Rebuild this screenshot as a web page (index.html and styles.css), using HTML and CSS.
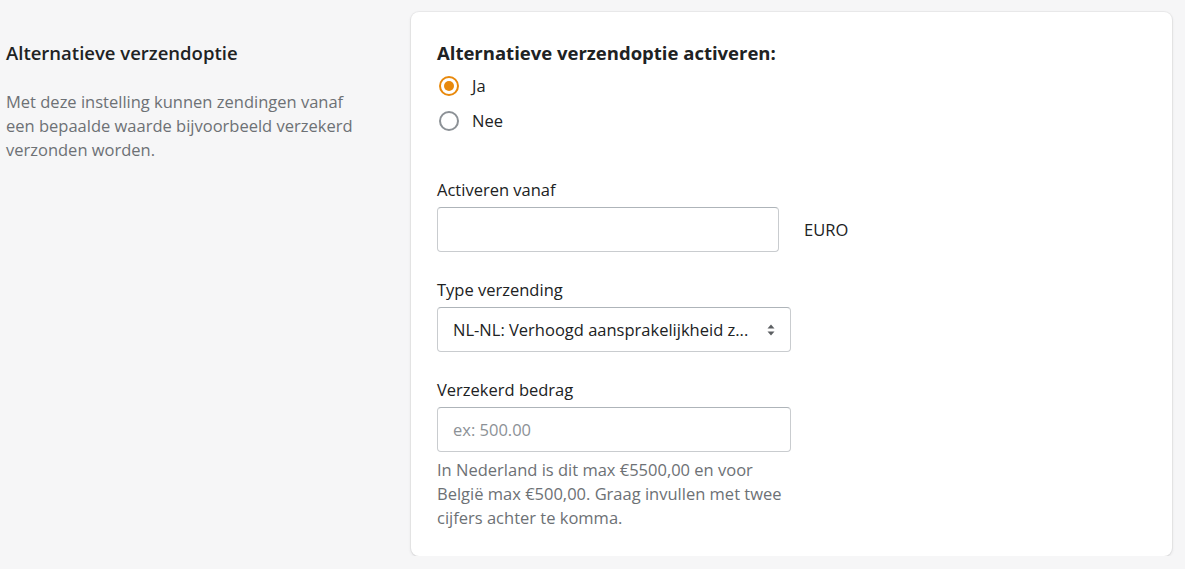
FILE: index.html
```html
<!DOCTYPE html>
<html lang="nl">
<head>
<meta charset="utf-8">
<title>Alternatieve verzendoptie</title>
<link rel="stylesheet" href="styles.css">
</head>
<body>
<div class="layout">
  <div class="aside">
    <h2 class="aside-title">Alternatieve verzendoptie</h2>
    <p class="aside-desc">Met deze instelling kunnen zendingen vanaf een bepaalde waarde bijvoorbeeld verzekerd verzonden worden.</p>
  </div>
  <div class="card">
    <h3 class="card-title">Alternatieve verzendoptie activeren:</h3>
    <div class="radios">
      <label class="radio"><span class="radio-circle checked"></span><span>Ja</span></label>
      <label class="radio"><span class="radio-circle"></span><span>Nee</span></label>
    </div>
    <div class="field">
      <div class="label">Activeren vanaf</div>
      <div class="input-row">
        <div class="input short"></div>
        <span class="suffix">EURO</span>
      </div>
    </div>
    <div class="field field-next">
      <div class="label">Type verzending</div>
      <div class="input select">
        <span>NL-NL: Verhoogd aansprakelijkheid z...</span>
        <svg class="arrows" width="10" height="14" viewBox="0 0 10 14"><path d="M5 1.5 L8.5 5.5 H1.5 Z" fill="#5c5f62"/><path d="M5 12.5 L8.5 8.5 H1.5 Z" fill="#5c5f62"/></svg>
      </div>
    </div>
    <div class="field field-next">
      <div class="label">Verzekerd bedrag</div>
      <div class="input"><span class="placeholder">ex: 500.00</span></div>
      <p class="help">In Nederland is dit max €5500,00 en voor België max €500,00. Graag invullen met twee cijfers achter te komma.</p>
    </div>
  </div>
</div>
</body>
</html>
```

FILE: styles.css
```css
html, body {
  margin: 0;
  padding: 0;
  background: #f6f6f7;
  font-family: "Open Sans", "Noto Sans", sans-serif;
  color: #202223;
}
.layout {
  display: flex;
  align-items: flex-start;
  padding: 12px 0 0 6px;
}
.aside {
  width: 358px;
  margin-right: 47px;
  padding-top: 28px;
}
.aside-title {
  margin: 0;
  font-size: 18.5px;
  font-weight: 600;
  line-height: 26px;
}
.aside-desc {
  margin: 24px 0 0;
  font-size: 16.5px;
  line-height: 24px;
  color: #6d7175;
}
.card {
  width: 761px;
  height: 544px;
  box-sizing: border-box;
  background: #fff;
  border-radius: 8px;
  box-shadow: 0 0 0 1px rgba(63,63,68,0.05), 0 1px 3px 0 rgba(63,63,68,0.15);
  padding: 27px 26px;
}
.card-title {
  margin: 0;
  font-size: 18.5px;
  font-weight: 700;
  line-height: 28px;
}
.radios {
  display: flex;
  flex-direction: column;
  gap: 11px;
  margin-top: 7px;
}
.radio {
  display: flex;
  align-items: center;
  gap: 13px;
  font-size: 16.5px;
  line-height: 24px;
  margin-left: 2px;
}
.radio-circle {
  width: 20px;
  height: 20px;
  box-sizing: border-box;
  border-radius: 50%;
  border: 2px solid #8c9196;
  display: flex;
  align-items: center;
  justify-content: center;
}
.radio-circle.checked {
  border-color: #e8890c;
}
.radio-circle.checked::after {
  content: "";
  width: 10px;
  height: 10px;
  border-radius: 50%;
  background: #e8890c;
}
.field {
  margin-top: 45px;
}
.field-next {
  margin-top: 26px;
}
.label {
  font-size: 16.5px;
  line-height: 24px;
  margin-bottom: 5px;
}
.input-row {
  display: flex;
  align-items: center;
  gap: 25px;
}
.input {
  width: 354px;
  height: 45px;
  box-sizing: border-box;
  border: 1px solid #c9cccf;
  border-top-color: #aeb4b9;
  border-radius: 4px;
  display: flex;
  align-items: center;
  padding: 0 15px;
  font-size: 16.5px;
}
.input.short {
  width: 342px;
}
.suffix {
  font-size: 16.5px;
}
.select {
  justify-content: space-between;
  padding-right: 14px;
}
.placeholder {
  color: #8c9196;
}
.help {
  margin: 6px 0 0;
  width: 354px;
  font-size: 16.5px;
  line-height: 24px;
  color: #6d7175;
}
```
